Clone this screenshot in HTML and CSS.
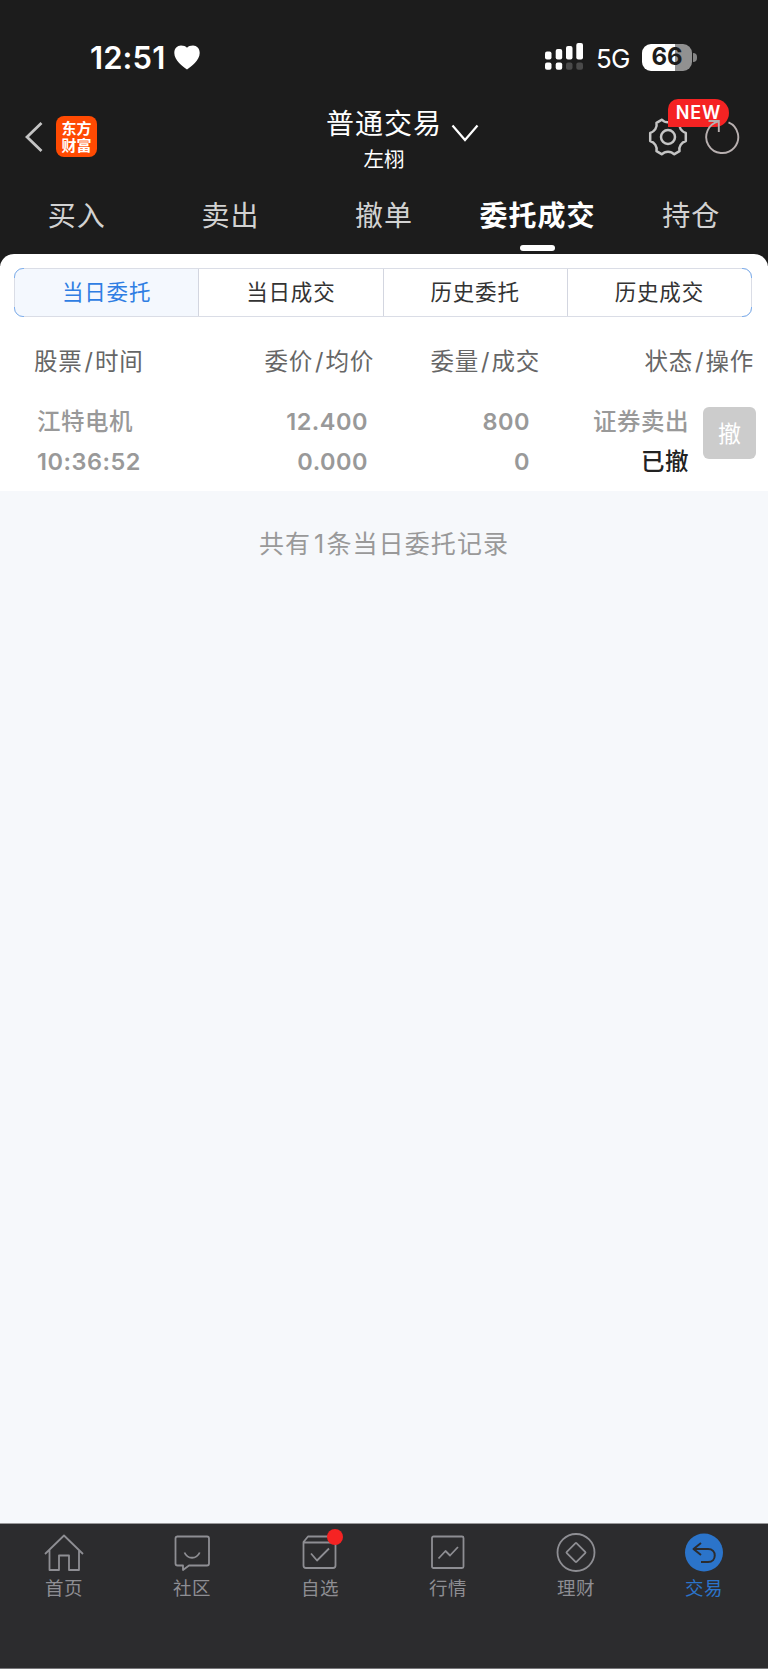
FILE: index.html
```html
<!DOCTYPE html>
<html lang="zh-CN">
<head>
  <meta charset="UTF-8">
  <title>普通交易</title>
  <link rel="stylesheet" href="styles.css">
</head>
<body>
  <header class="top">
    <div class="status">
      <span class="time">12:51</span>
      <svg class="heart" width="26" height="25" viewBox="0 0 26 25"><path d="M13 24.5C9 21.5 0.3 15.5 0.3 8C0.3 3.5 3.3 0.6 7 0.6C9.6 0.6 11.8 1.5 13 2.8C14.2 1.5 16.4 0.6 19 0.6C22.7 0.6 25.7 3.5 25.7 8C25.7 15.5 17 21.5 13 24.5Z" fill="#fff"/></svg>
      <svg class="signal" width="39" height="28" viewBox="0 0 39 28">
        <g fill="#fff">
          <rect x="0" y="8.5" width="6.5" height="8" rx="2"/>
          <rect x="10.7" y="6" width="6.5" height="10.5" rx="2"/>
          <rect x="21" y="3" width="6.5" height="13.5" rx="2"/>
          <rect x="31.3" y="0" width="6.7" height="16.5" rx="2"/>
          <rect x="0" y="19.5" width="6.5" height="7.3" rx="2"/>
          <rect x="10.7" y="19.5" width="6.5" height="7.3" rx="2"/>
        </g>
        <g fill="#4a4a4a">
          <rect x="21" y="19.5" width="6.5" height="7.3" rx="2"/>
          <rect x="31.3" y="19.5" width="6.7" height="7.3" rx="2"/>
        </g>
      </svg>
      <span class="network">5G</span>
      <span class="battery">66</span>
      <span class="battery-tip"></span>
    </div>

    <div class="navbar">
      <div class="nav-left">
        <svg width="18" height="32" viewBox="0 0 18 32"><path d="M16.5 2L2 16L16.5 30" fill="none" stroke="#c4c4c4" stroke-width="2.8"/></svg>
        <div class="logo">东方<br>财富</div>
      </div>
      <div class="account">
        <div class="account-type">普通交易</div>
        <div class="account-name">左栩</div>
      </div>
      <svg class="arrow-down" width="28" height="18" viewBox="0 0 28 18"><path d="M1.5 1.5L14 16L26.5 1.5" fill="none" stroke="#fff" stroke-width="2.2"/></svg>
      <div class="nav-right">
        <svg width="40" height="40" viewBox="0 0 40 40" fill="none" stroke="#c4c4c4" stroke-width="2.5" stroke-linejoin="round">
          <path d="M14 2.7C17 6.2 23 6.2 26 2.7L31.5 5.8C30.5 10.5 33.500 14.500 37.800 16V24C33.500 25.500 30.500 29.500 31.500 34.200L26 37.300C23 33.800 17 33.800 14 37.300L8.500 34.200C9.500 29.500 6.500 25.500 2.200 24V16C6.500 14.500 9.500 10.500 8.500 5.800Z"/>
          <circle cx="20" cy="20" r="7"/>
        </svg>
        <span class="new">NEW</span>
        <svg class="refresh" width="36" height="38" viewBox="0 0 36 38" fill="none" stroke="#b8b0b0" stroke-width="1.9">
          <path d="M24.5 4.3A16 16 0 1 1 14.8 3.4"/>
          <path d="M4.5 3H14.8V14"/>
        </svg>
      </div>
    </div>

    <nav class="tabs">
      <a>买入</a>
      <a>卖出</a>
      <a>撤单</a>
      <a class="active">委托成交</a>
      <a>持仓</a>
    </nav>
  </header>

  <main class="panel">
    <div class="segment">
      <span class="current">当日委托</span>
      <span>当日成交</span>
      <span>历史委托</span>
      <span>历史成交</span>
    </div>
    <div class="thead">
      <span>股票<i>/</i>时间</span>
      <span>委价<i>/</i>均价</span>
      <span>委量<i>/</i>成交</span>
      <span>状态<i>/</i>操作</span>
    </div>
    <div class="order">
      <div><p class="name">江特电机</p><p>10:36:52</p></div>
      <div><p>12.400</p><p>0.000</p></div>
      <div><p>800</p><p>0</p></div>
      <div><p class="name">证券卖出</p><p class="name state">已撤</p></div>
      <button class="cancel">撤</button>
    </div>
  </main>
  <p class="total">共有<span>1</span>条当日委托记录</p>

  <footer class="tabbar">
    <a>
      <svg width="40" height="40" viewBox="0 0 40 40"><path d="M1 21L20 2.5L39 21M5.5 17V37H15V22.5H25V37H35V17"/></svg>
      首页
    </a>
    <a>
      <svg width="40" height="40" viewBox="0 0 40 40"><path d="M5 3.5H35Q37 3.5 37 5.5V30.5Q37 32.5 35 32.5H17L11 37V32.5H5.5Q3.5 32.5 3.5 30.5V5.5Q3.5 3.5 5.5 3.5M12.5 19.500C15.500 26.500 24.500 26.500 27.700 19.500"/></svg>
      社区
    </a>
    <a>
      <svg width="40" height="40" viewBox="0 0 40 40"><path d="M3.5 9L8 3.5H31L35.5 9V32.5Q35.5 35 33 35H6Q3.5 35 3.5 32.5ZM3.5 9.5H35.5M11 20.5L17 27.5L29 15.5"/></svg>
      <b class="dot"></b>
      自选
    </a>
    <a>
      <svg width="40" height="40" viewBox="0 0 40 40"><rect x="4" y="3.5" width="31.5" height="31.5" rx="1.5"/><path d="M10.5 25.5L17.5 18L22 22.5L30 14"/></svg>
      行情
    </a>
    <a>
      <svg width="40" height="40" viewBox="0 0 40 40"><circle cx="20" cy="19.5" r="18.5"/><rect x="13" y="12.5" width="14" height="14" rx="1" transform="rotate(45 20 19.5)"/></svg>
      理财
    </a>
    <a class="active">
      <svg width="40" height="40" viewBox="0 0 40 40"><circle class="disc" cx="20" cy="19.5" r="19"/><path d="M17 10L9.5 16L17 22M9.5 16H24C33 16 33 29 24 29H17"/></svg>
      交易
    </a>
  </footer>
</body>
</html>
```

FILE: styles.css
```css
* {
  box-sizing: border-box;
}

body {
  margin: 0;
  width: 768px;
  height: 1669px;
  display: flex;
  flex-direction: column;
  background: #f6f8fb;
  font-family: Inter, 'Noto Sans CJK SC', sans-serif;
  overflow: hidden;
}

p {
  margin: 0;
}

.top {
  height: 266px;
  flex: none;
  background: #1c1c1c;
  color: #fff;
}

/* status bar */
.status {
  height: 97px;
  padding: 17px 71px 0 90px;
  display: flex;
  align-items: center;
}

.time {
  width: 84px;
  font-size: 31px;
  font-weight: 600;
  letter-spacing: 0.1px;
}

.signal {
  margin-left: 345px;
}

.network {
  width: 46px;
  margin-left: 12px;
  padding-top: 2px;
  font-size: 26px;
  letter-spacing: -0.8px;
}

.battery {
  width: 50px;
  height: 27px;
  flex: none;
  border-radius: 9px;
  background: linear-gradient(90deg, #fff 66%, #919191 66%);
  color: #1c1c1c;
  font-size: 24px;
  font-weight: 700;
  line-height: 26px;
  text-align: center;
}

.battery-tip {
  width: 4px;
  height: 9px;
  margin-left: 1px;
  border-radius: 0 4px 4px 0;
  background: #858585;
}

/* title bar */
.navbar {
  position: relative;
  height: 89px;
  display: flex;
  justify-content: space-between;
}

.nav-left {
  display: flex;
  align-items: center;
  height: 41px;
  margin: 19px 0 0 25px;
  gap: 13px;
}

.logo {
  width: 41px;
  height: 41px;
  padding-top: 3px;
  border-radius: 8px;
  background: #ff4a02;
  font-family: 'Noto Sans CJK SC', sans-serif;
  font-size: 15px;
  font-weight: 700;
  line-height: 17px;
  text-align: center;
}

.account {
  position: absolute;
  left: 304px;
  top: 9px;
  width: 160px;
  text-align: center;
}

.account-type {
  font-size: 28px;
  letter-spacing: 1px;
  line-height: 36px;
}

.account-name {
  font-size: 20.5px;
  line-height: 35px;
}

.arrow-down {
  position: absolute;
  left: 451px;
  top: 27px;
}

.nav-right {
  position: relative;
  display: flex;
  align-items: center;
  height: 40px;
  margin: 20px 28px 0 0;
  gap: 16px;
}

.new {
  position: absolute;
  left: 20px;
  top: -18px;
  width: 61px;
  height: 28px;
  border-radius: 10px 14px 14px 0;
  background: #f52323;
  font-size: 18px;
  font-weight: 600;
  line-height: 28px;
  letter-spacing: 0.8px;
  text-align: center;
}

.refresh {
  position: relative;
  z-index: 1;
}

.tabs {
  display: flex;
  height: 68px;
}

.tabs a {
  position: relative;
  flex: 1;
  padding-top: 1px;
  color: #d2d2d2;
  font-size: 28px;
  letter-spacing: 1px;
  line-height: 58px;
  text-align: center;
  white-space: nowrap;
}

.tabs .active {
  color: #fff;
  font-weight: 700;
}

.tabs .active::after {
  content: '';
  position: absolute;
  left: 59px;
  bottom: 3px;
  width: 35px;
  height: 6px;
  border-radius: 3px;
  background: #fff;
}

/* order list */
.panel {
  position: relative;
  height: 237px;
  flex: none;
  margin-top: -12px;
  padding: 14px 13px 0 14px;
  border-radius: 14px 14px 0 0;
  background: #fff;
}

.segment {
  position: relative;
  display: flex;
  height: 49px;
  margin-right: 3px;
  border: 1px solid #dadde6;
  border-radius: 9px;
}

/* blue tint on the rounded corners only */
.segment::before {
  content: '';
  position: absolute;
  inset: -1px;
  border: 1px solid #7fb0ee;
  border-radius: 9px;
  clip-path: polygon(0 0, 10px 0, 10px 100%, 0 100%, 0 calc(100% - 10px), 8px calc(100% - 10px), 8px 10px, 0 10px, 0 0, 100% 0, 100% 10px, calc(100% - 8px) 10px, calc(100% - 8px) calc(100% - 10px), 100% calc(100% - 10px), 100% 100%, calc(100% - 10px) 100%, calc(100% - 10px) 0, 0 0);
}

.segment span {
  flex: 1;
  color: #333;
  font-size: 21.5px;
  letter-spacing: 0.8px;
  line-height: 47px;
  text-align: center;
}

.segment span + span {
  border-left: 1px solid #d3d6e0;
}

.segment .current {
  border-radius: 8px 0 0 8px;
  background: #f4f8fe;
  color: #2f7ee3;
}

.thead {
  display: grid;
  grid-template-columns: 150px 190px 166px 214px;
  margin-top: 27px;
  padding-left: 20px;
  color: #666;
  font-size: 23.5px;
  letter-spacing: 0.8px;
  line-height: 36px;
  text-align: right;
}

.thead span:first-child,
.order div:first-child {
  text-align: left;
}

.thead i {
  font-style: normal;
  margin: 0 1px 0 2px;
}

.order {
  display: grid;
  grid-template-columns: 170px 161px 162px 159px 67px;
  padding-left: 23px;
  margin-top: 21px;
  color: #999;
  font-size: 23.5px;
  font-weight: 600;
  line-height: 40px;
  letter-spacing: 0.5px;
  text-align: right;
}

.order p {
  position: relative;
  top: 1px;
}

.order .name {
  font-size: 23.5px;
  font-weight: 500;
  letter-spacing: 0.5px;
}

.order .state {
  color: #222;
}

.cancel {
  width: 53px;
  height: 52px;
  margin: 6px 0 0 14px;
  padding: 0 0 2px;
  border: 0;
  border-radius: 6px;
  background: #ccc;
  color: #fff;
  font-family: inherit;
  font-size: 23px;
}

.total {
  padding-top: 34px;
  color: #999;
  font-size: 25px;
  letter-spacing: 1.1px;
  line-height: 38px;
  text-align: center;
}

.total span {
  margin: 0 1px 0 3px;
}

/* bottom bar */
.tabbar {
  display: flex;
  height: 146px;
  margin-top: auto;
  padding-top: 9px;
  border-top: 1px solid #98989a;
  border-bottom: 1px solid #77777a;
  background: #2c2c2e;
}

.tabbar a {
  position: relative;
  flex: 1;
  display: flex;
  flex-direction: column;
  align-items: center;
  color: #8e8e93;
  font-size: 18.5px;
  letter-spacing: 0.6px;
  line-height: 30px;
}

.tabbar svg {
  fill: none;
  stroke: #8e8e93;
  stroke-width: 1.8;
  stroke-linejoin: round;
}

.tabbar .active {
  color: #2b74ca;
}

.tabbar .active path {
  stroke: #2c2c2e;
  stroke-width: 2;
}

.tabbar .disc {
  fill: #2b74ca;
  stroke: none;
}

.dot {
  position: absolute;
  left: 71px;
  top: -4px;
  width: 16px;
  height: 16px;
  border-radius: 50%;
  background: #f52323;
}
```
